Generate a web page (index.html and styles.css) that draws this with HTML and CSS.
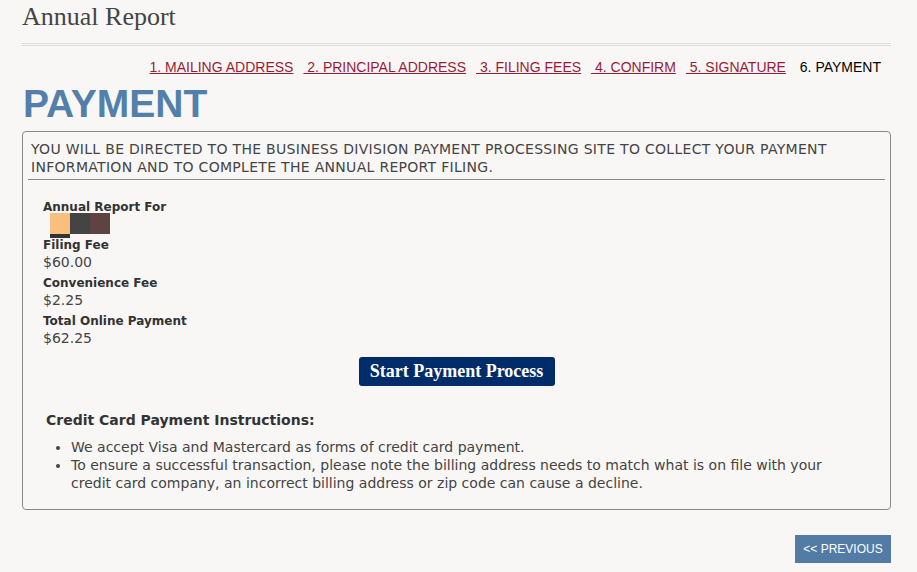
FILE: index.html
```html
<!DOCTYPE html>
<html>
<head>
    <meta charset="UTF-8">
    <meta name="viewport" content="width=device-width, initial-scale=1.0">
    <title>Annual Report - Payment</title>
    <link rel="stylesheet" href="styles.css">
</head>
<body>
    <div class="page">
        <h1 class="page-title">Annual Report</h1>
        <hr class="title-rule">

        <div class="steps">
            <a href="#" class="step">1. MAILING ADDRESS</a>
            <a href="#" class="step">&nbsp;2. PRINCIPAL ADDRESS</a>
            <a href="#" class="step">&nbsp;3. FILING FEES</a>
            <a href="#" class="step">&nbsp;4. CONFIRM</a>
            <a href="#" class="step">&nbsp;5. SIGNATURE</a>
            <span class="step current">&nbsp;6. PAYMENT</span>
        </div>

        <h2 class="section-title">PAYMENT</h2>

        <div class="panel">
            <div class="panel-intro">
                YOU WILL BE DIRECTED TO THE BUSINESS DIVISION PAYMENT PROCESSING SITE TO COLLECT YOUR PAYMENT INFORMATION AND TO COMPLETE THE ANNUAL REPORT FILING.
            </div>

            <div class="fees">
                <div class="fee">
                    <div class="fee-label">Annual Report For</div>
                    <div class="redacted">
                        <span class="blk peach"></span><span class="blk dark"></span><span class="blk brown"></span>
                        <span class="blk-under"></span>
                    </div>
                </div>
                <div class="fee">
                    <div class="fee-label">Filing Fee</div>
                    <div class="fee-value">$60.00</div>
                </div>
                <div class="fee">
                    <div class="fee-label">Convenience Fee</div>
                    <div class="fee-value">$2.25</div>
                </div>
                <div class="fee">
                    <div class="fee-label">Total Online Payment</div>
                    <div class="fee-value">$62.25</div>
                </div>
            </div>

            <div class="pay-row">
                <button class="pay-btn">Start Payment Process</button>
            </div>

            <div class="instructions">
                <h3>Credit Card Payment Instructions:</h3>
                <ul>
                    <li>We accept Visa and Mastercard as forms of credit card payment.</li>
                    <li>To ensure a successful transaction, please note the billing address needs to match what is on file with your credit card company, an incorrect billing address or zip code can cause a decline.</li>
                </ul>
            </div>
        </div>

        <div class="nav-buttons">
            <button class="prev-btn">&lt;&lt; PREVIOUS</button>
        </div>
    </div>
</body>
</html>
```

FILE: styles.css
```css
body {
    margin: 0;
    background: #f8f7f5;
    font-family: "DejaVu Sans", Verdana, sans-serif;
    color: #444;
}
.page {
    width: 869px;
    margin-left: 22px;
}
.page-title {
    margin: 0;
    padding-top: 2px;
    font-family: "Liberation Serif", Georgia, serif;
    font-size: 26px;
    font-weight: normal;
    line-height: 30px;
    color: #444;
}
.title-rule {
    margin: 11px 0 0 0;
    height: 1px;
    border: none;
    border-top: 1px solid #ddd;
    border-bottom: 1px solid #ddd;
}
.steps {
    display: flex;
    justify-content: flex-end;
    gap: 10px;
    padding-right: 10px;
    margin-top: 12px;
    font-family: "Liberation Sans", Arial, sans-serif;
    font-size: 14px;
    line-height: 18px;
}
.step {
    color: #9b1b35;
    white-space: nowrap;
}
.step.current {
    color: #000;
}
.section-title {
    margin: 6px 0 5px 1px;
    font-family: "Liberation Sans", Arial, sans-serif;
    font-size: 39px;
    font-weight: bold;
    line-height: 44px;
    color: #5380aa;
}
.panel {
    border: 1px solid #888;
    border-radius: 4px;
    padding: 0 5px 17px 5px;
}
.panel-intro {
    padding: 8px 3px 3px 3px;
    font-size: 14px;
    letter-spacing: 0.3px;
    line-height: 18px;
    border-bottom: 1px solid #888;
}
.fees {
    padding: 19px 0 0 15px;
}
.fee {
    margin-bottom: 4px;
}
.fee-label {
    font-size: 12px;
    font-weight: bold;
    line-height: 16px;
    color: #333;
}
.fee-value {
    font-size: 14px;
    line-height: 18px;
}
.redacted {
    position: relative;
    display: flex;
    height: 20px;
    margin-left: 7px;
    margin-top: -2px;
}
.blk {
    width: 20px;
    height: 21px;
}
.peach {
    background: #f9bf7f;
}
.dark {
    background: #444;
}
.brown {
    background: #5f4343;
}
.blk-under {
    position: absolute;
    left: 0;
    top: 21px;
    width: 20px;
    height: 4px;
    background: #333;
}
.pay-row {
    display: flex;
    justify-content: center;
    margin-top: 10px;
}
.pay-btn {
    width: 196px;
    height: 29px;
    padding: 0;
    border: none;
    border-radius: 3px;
    background: #002d6a;
    color: #fff;
    font-family: "Liberation Serif", Georgia, serif;
    font-size: 18px;
    font-weight: bold;
    cursor: pointer;
}
.instructions {
    padding: 0 30px 0 18px;
    margin-top: 24px;
}
.instructions h3 {
    margin: 0;
    font-size: 14px;
    line-height: 20px;
    color: #333;
}
.instructions ul {
    margin: 8px 0 0 0;
    padding-left: 25px;
    font-size: 14px;
    line-height: 18px;
}
.nav-buttons {
    display: flex;
    justify-content: flex-end;
    margin-top: 25px;
}
.prev-btn {
    width: 96px;
    height: 28px;
    padding: 0;
    border: none;
    background: #527ba6;
    color: #fff;
    font-family: "Liberation Sans", Arial, sans-serif;
    font-size: 12px;
    cursor: pointer;
}
```
